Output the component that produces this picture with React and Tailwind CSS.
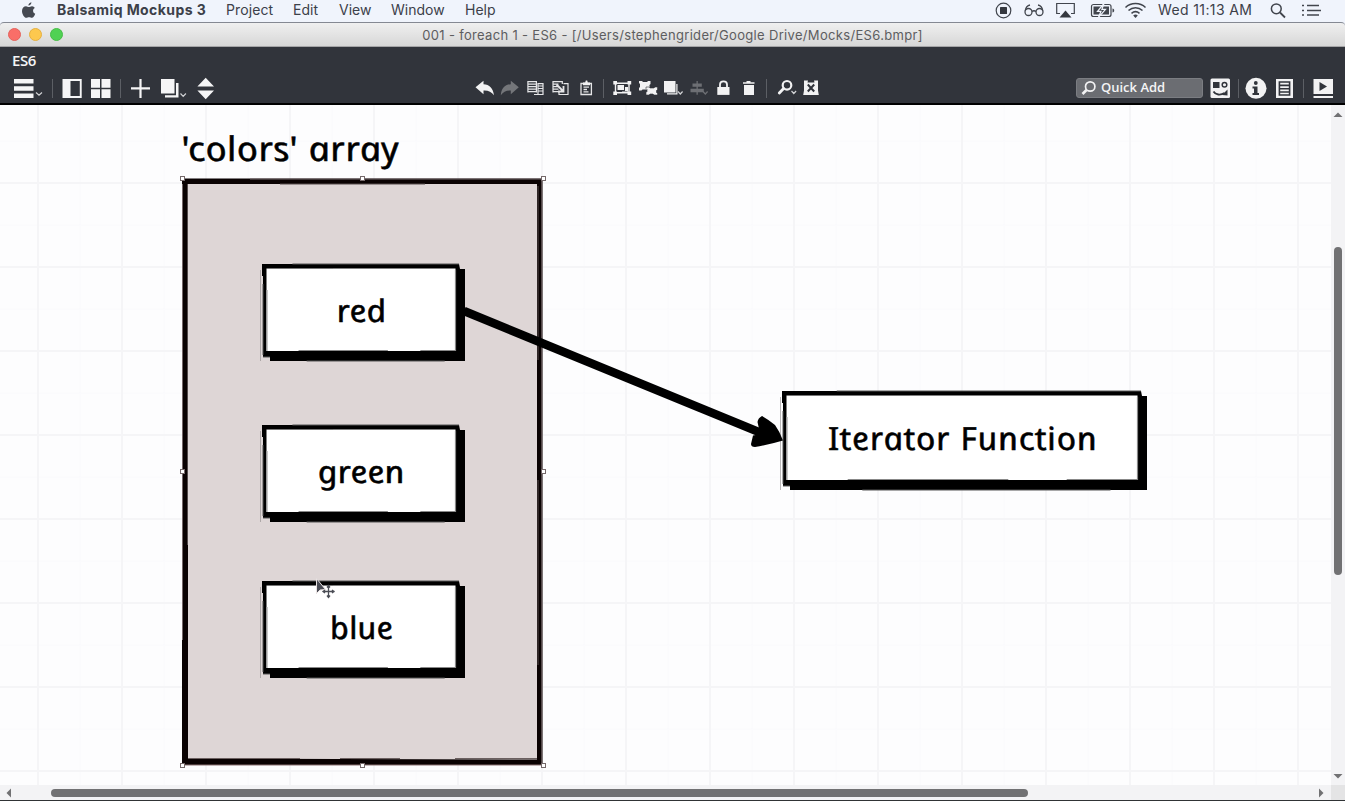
const HAND = 'font-["Noto_Sans","Open_Sans",sans-serif] italic';

function Label({ children, className }) {
  return (
    <span className={`inline-block origin-center skew-x-[12deg] whitespace-nowrap text-black [-webkit-text-stroke:0.5px_black] [stroke-linejoin:round] ${HAND} ${className}`}>
      {children}
    </span>
  );
}

function Sep() {
  return <div className="h-5 w-px shrink-0 bg-[#5c5f65]" />;
}

function Icon({ w = 16, h = 16, className = "", children }) {
  return (
    <svg width={w} height={h} viewBox={`0 0 ${w} ${h}`} className={`shrink-0 ${className}`} fill="#f2f2f3">
      {children}
    </svg>
  );
}

function MenuBar() {
  return (
    <div className='flex h-[22px] shrink-0 items-center bg-[#f0f4fc] font-["Inter",sans-serif] text-[14px] leading-[20px] text-[#3c4049]'>
      <svg width="15" height="17" viewBox="0 0 15 17" className="mb-[2px] ml-[21px] shrink-0" fill="#454951">
        <path d="M10.4.3c.1 1.6-1.300 3.300-3 3.300C7.200 2.100 8.700.500 10.400.3zM13.800 6c-1.200.7-1.800 1.700-1.700 2.900.1 1.400.9 2.300 2.100 2.800-.6 1.800-1.900 4-3.300 4.100-1 0-1.500-.6-2.800-.6s-1.900.6-2.800.6C3.400 15.800 1 12.300 1 9c0-3 1.900-4.800 4-4.800 1.200 0 2.100.8 2.900.8.800 0 1.800-.9 3.300-.8 1 .1 2 .6 2.600 1.800z" />
      </svg>
      <div className="flex pb-[2px]">
        <span className="ml-[21px] w-[149px] whitespace-nowrap font-bold tracking-[0.42px]">Balsamiq Mockups 3</span>
        <span className="ml-[20px] w-[48px] tracking-[0.1px]">Project</span>
        <span className="ml-[19px] w-[26px]">Edit</span>
        <span className="ml-[20px] w-[33px]">View</span>
        <span className="ml-[19px] w-[54px]">Window</span>
        <span className="ml-[20px]">Help</span>
      </div>
      <div className="flex-1" />
      <svg width="160" height="22" viewBox="990 0 160 22" className="shrink-0" fill="none" stroke="#41454d">
        <circle cx="1003.500" cy="10.500" r="7.300" strokeWidth="1.200" />
        <rect x="1000" y="7" width="7" height="7" rx="0.500" fill="#35383f" stroke="none" />
        <g strokeWidth="1.300">
          <circle cx="1028.500" cy="12" r="3.500" />
          <circle cx="1039.500" cy="12" r="3.500" />
          <path d="M1032 11.500q2-1.500 4 0M1025.300 10.500c.5-3 2-5 4.700-5.500M1042.700 10.500c-.5-3-2-5-4.700-5.500" />
        </g>
        <path d="M1060 13.500h-3.300v-10h17.600v10H1071" strokeWidth="1.200" />
        <path d="M1065.500 10.500l6 7h-12z" fill="#35383f" stroke="none" />
        <rect x="1091.500" y="4.500" width="19.500" height="12" rx="2" strokeWidth="1.200" />
        <rect x="1093.500" y="6.500" width="15.500" height="8" fill="#41454d" stroke="none" />
        <path d="M1104 3.500l-6.500 7.800h3.500l-2.500 6 7-8h-3.600z" fill="#41454d" stroke="#f0f4fc" strokeWidth="1.200" />
        <path d="M1112.500 8.500c2.300.5 2.300 3.500 0 4z" fill="#41454d" stroke="none" />
        <g strokeWidth="1.500">
          <path d="M1125.500 7.500c5.500-5.300 14.500-5.300 20 0M1128.500 10.500c4-3.800 10-3.800 14 0M1131.500 13.300c2.400-2 5.600-2 8 0" />
        </g>
        <path d="M1135.500 18l-2.300-2.500c1.300-1.200 3.300-1.200 4.600 0z" fill="#41454d" stroke="none" />
      </svg>
      <span className="ml-[8px] w-[95px] whitespace-nowrap pb-[2px] tracking-[0.38px]">Wed 11:13 AM</span>
      <svg width="92" height="22" viewBox="1253 0 92 22" className="shrink-0" fill="none" stroke="#41454d" strokeWidth="1.500">
        <circle cx="1276.300" cy="8.800" r="4.900" />
        <path d="M1280 12.500l5 5" strokeWidth="1.800" />
        <path d="M1307 5.500h12M1307 10.500h14M1307 15h12M1302 5.500h2M1302 10.500h2M1302 15h2" />
      </svg>
    </div>
  );
}

function TitleBar() {
  return (
    <div className='relative flex h-[25px] shrink-0 items-center justify-center rounded-t-[4px] border-t border-b border-t-[#858993] border-b-[#a5a5a7] bg-linear-to-b from-[#f0f0f0] to-[#d7d7d7] font-["Inter",sans-serif] text-[13px] text-[#5d5d5f]'>
      <div className="absolute left-2 top-[5px] flex gap-[8px]">
        <i className="size-[13px] rounded-full border border-[#e4635c] bg-[#f96e68]" />
        <i className="size-[13px] rounded-full border border-[#e5b040] bg-[#fdc84e]" />
        <i className="size-[13px] rounded-full border border-[#47bd47] bg-[#50d153]" />
      </div>
      <span className="whitespace-nowrap pt-[2px] tracking-[0.32px]">001 - foreach 1 - ES6 - [/Users/stephengrider/Google Drive/Mocks/ES6.bmpr]</span>
    </div>
  );
}

function Toolbar() {
  return (
    <div className="h-[58px] shrink-0 border-b-2 border-black bg-[#31343b]">
      <div className='h-[27px] pl-[12px] pt-[4px] font-["Open_Sans",sans-serif] text-[15px] leading-[18px] font-semibold tracking-[-0.4px] text-[#f5f5f6]'>ES6</div>
      <div className="flex h-[28px] items-center">
        <svg width="220" height="28" viewBox="0 74 220 28" className="shrink-0" fill="#f5f5f6">
          <path d="M14 79h19.500v4.500H14zM14 86.200h19.500v4.500H14zM14 93.500h19.500V98H14z" />
          <path d="M36 92.500l3 2.800 3-2.800M180.500 93.500l2.700 2.800 2.700-2.800" fill="none" stroke="#cfd0d3" strokeWidth="1.200" />
          <path d="M52 79h1v19h-1zM120 79h1v19h-1z" fill="#5c5f65" />
          <path d="M62.500 79h19.200v19H62.500zM70.500 81v15h9.300V81z" fillRule="evenodd" />
          <path d="M91 79h9v8.700h-9zM101.500 79h9v8.700h-9zM91 89.300h9V98h-9zM101.500 89.300h9V98h-9z" />
          <path d="M139.400 79h2.200v8.300h8.400v2.200h-8.400V98h-2.200v-8.500H131v-2.200h8.400z" />
          <path d="M161 79h13.500v14.500H161zM176 83h2.500v14.500H165v-2.300h11z" />
          <path d="M205.700 77.800l8.300 8.700h-16.600zM205.700 99.200l8.300-8.700h-16.600z" />
        </svg>
        <svg width="356" height="28" viewBox="470 74 356 28" className="ml-[250px] shrink-0" fill="#f2f2f3">
          <path d="M475.500 87.200l8-6.500v3.600c6 .3 9.500 4 10.500 11-2.500-3.500-5.500-5-10.500-4.800v3.700z" />
          <path d="M518.800 87.200l-8-6.500v3.600c-6 .3-9.500 4-10 11 2.500-3.500 5-5 10-4.800v3.700z" fill="#74767a" />
          <g fill="none" stroke="#e5e5e7" strokeWidth="1.200">
            <path d="M527.500 81.600h9M527.500 84.100h9M527.500 86.600h9M527.500 89.100h9M527.500 91.600h9M527.900 81v11.500M536.400 81v11.500M538 83.600h5V94.500h-9M538 86h5M538 88.500h5M538 91h5M543 83v12M538 83v12" />
            <path d="M552.500 81.600h10M552.500 84.100h6M552.500 86.600h6M552.500 89.100h6M552.500 91.600h6M553 81v11.500M562.300 81v3M563.500 83.600h4.500v10.900h-9V92" />
            <path d="M556.500 84.500l6.500 6.500M563.500 86v5.500H558" strokeWidth="1.800" />
            <path d="M581 83.500h10.400v11H581zM583.500 87.200h5.500M583.500 89.500h3.500M583.500 91.800h5" strokeWidth="1.300" />
          </g>
          <path d="M583 82.500h2.200l.6-2h1.400l.6 2h2.200v2.800h-7z" />
          <path d="M603 79h1v19h-1zM766 79h1v19h-1z" fill="#5c5f65" />
          <path d="M615.500 83.300h13.500v9.500h-13.500z" fill="none" stroke="#f2f2f3" strokeWidth="1.400" />
          <path d="M613.300 81h3.700v3.600h-3.700zM627.500 81h3.700v3.600h-3.700zM613.300 91.400h3.700v3.600h-3.700zM627.500 91.400h3.700v3.600h-3.700zM617.500 85h6.500v5h-6.500zM625 87h3v4.500h-6V91h3z" />
          <path d="M639 81h3l1 1h4l1-1h2.500v3l-1 1v3l1 1v1.500h-3l-1-1h-4l-1 1H639V88l1-1v-3l-1-1z" />
          <path d="M646 87h3l1 1h4l1-1h2.500v2.500l-1 1v2l1 1V95H654l-1-1h-3l-1 1h-3v-2.500l1-1v-2l-1-1z" stroke="#31343b" strokeWidth="0.600" />
          <path d="M664 81h11.500v11.500H664zM676.300 84h1.200v10.500H667v-1.200h9.300z" />
          <path d="M678 91.500l2.300 2.500 2.300-2.500M791.500 91l2.300 2.500 2.300-2.500" fill="none" stroke="#d0d1d4" strokeWidth="1.200" />
          <path d="M696.500 81h1.300v2.500h4v3.300h-4v2h6v3.400h-6v2.500h-1.300v-2.500h-6v-3.400h6v-2h-4v-3.300h4z" fill="#6d6f74" />
          <path d="M703 91.500l2.300 2.500 2.300-2.500" fill="none" stroke="#6d6f74" strokeWidth="1.200" />
          <path d="M717.300 87h12.200v7.900h-12.200z" />
          <path d="M720 88v-3.500c0-4.200 7-4.200 7 0V88" fill="none" stroke="#f2f2f3" strokeWidth="1.800" />
          <path d="M743 82.300h3.500V81h4v1.300h4v1.500H743zM744 85h10v9.900h-10z" />
          <circle cx="787" cy="85.300" r="4.300" fill="none" stroke="#f2f2f3" strokeWidth="2.200" />
          <path d="M783.600 88.500l-4.300 4.500" stroke="#f2f2f3" strokeWidth="2.800" strokeLinecap="round" />
          <path d="M804 80.500h4l-.5 2h7l-.5-2h4v10l.8 4.500h-15.600l.8-4.500z" />
          <path d="M807.800 84.500l6.400 7M814.200 84.500l-6.400 7" stroke="#31343b" strokeWidth="2" />
        </svg>
        <div className='ml-auto flex h-[20px] w-[127px] items-center rounded-[3px] border border-[#7b7d82] bg-[#6b6d72] pl-[4px] font-["Open_Sans",sans-serif] text-[13px] font-semibold text-[#f4f4f5]'>
          <Icon>
            <circle cx="9.200" cy="6.500" r="4.700" fill="none" stroke="#f2f2f3" strokeWidth="1.700" />
            <path d="M5.500 10L1.500 14" stroke="#f2f2f3" strokeWidth="2.600" />
          </Icon>
          <span className="ml-[4px] whitespace-nowrap">Quick Add</span>
        </div>
        <svg width="142" height="28" viewBox="1203 74 142 28" className="shrink-0" fill="#f2f2f3">
          <rect x="1210.500" y="78.500" width="19.500" height="19.500" rx="1.500" />
          <g fill="none" stroke="#31343b" strokeWidth="1.500">
            <path d="M1213 82h6.500v6h-6.500z" fill="#31343b" stroke="none" />
            <circle cx="1224.500" cy="84.800" r="2.300" />
            <path d="M1213.500 91.500c2 3.500 7 4 11 1.500" strokeWidth="1.800" />
            <path d="M1227.500 89.500v6l-5.500-.5z" fill="#31343b" stroke="none" />
          </g>
          <path d="M1238 79h1v19h-1zM1303 79h1v19h-1z" fill="#5c5f65" />
          <circle cx="1256" cy="88.300" r="10.500" />
          <circle cx="1255.800" cy="83" r="1.900" fill="#31343b" />
          <path d="M1252.500 86.500h5v6.500h1.500v2h-6.500v-2h1.500v-4.500h-1.500z" fill="#31343b" />
          <path d="M1276 79h17v19h-17z" />
          <path d="M1279.400 82h10.200v13h-10.200zM1279 85.400h11M1279 88.700h11M1279 92h11" fill="none" stroke="#31343b" strokeWidth="1.600" />
          <path d="M1313.500 79h19.500v15h-19.500zM1313.500 96h19.500v2h-19.500z" />
          <path d="M1319.500 82v9l7.500-4.500z" fill="#31343b" />
        </svg>
      </div>
    </div>
  );
}

function SketchBox({ x, y, w, h, children }) {
  const r = w - 5, b = h - 10;
  return (
    <div className="absolute flex items-center justify-center pr-[6px] pb-[5px]" style={{ left: x, top: y, width: w, height: h }}>
      <svg width={w + 4} height={h + 4} viewBox={`-2 -2 ${w + 4} ${h + 4}`} className="absolute -left-[2px] -top-[2px]">
        <path d={`M8 5H${w}V${h}H8z`} fill="#000" />
        <path d={`M-1.500 6V${h}`} stroke="#8d8989" strokeWidth="0.600" />
        <path d={`M0 0H${r - 1}L${r} 5V${h - 4}H1V12H0z`} fill="#000" />
        <path d={`M4.500 4.500H${r - 4.500}V${b}H4.500z`} fill="#fff" />
        <path d={`M${w * 0.15} 0H${r - 1}`} stroke="#555" strokeWidth="1" />
        <path d={`M5 4.500H${w * 0.35}`} stroke="#777" strokeWidth="1" />
        <path d={`M5 26V${b}`} stroke="#aaa" strokeWidth="1.300" />
        <path d={`M${r - 4.500} 6V${b}M${w * 0.18} ${b - 0.500}H${w * 0.62}M${w * 0.78} ${b - 0.500}H${r - 4}`} stroke="#888" strokeWidth="1.200" />
        <path d={`M1 20V${h - 6}M1 ${h - 4}H8`} stroke="#555" strokeWidth="1" />
        <path d={`M${w * 0.22} ${h}H${w * 0.9}`} stroke="#555" strokeWidth="1" />
      </svg>
      <div className="relative">{children}</div>
    </div>
  );
}

function Handle({ x, y }) {
  return <i className="absolute size-[5px] border border-[#75696a] bg-white" style={{ left: x - 2, top: y - 2 }} />;
}

function Canvas() {
  return (
    <div className="relative min-w-0 flex-1 overflow-hidden bg-[#fdfdfe]">
      <svg width="1331" height="680" viewBox="0 105 1331 680" className="absolute left-0 top-0">
        <defs>
          <pattern id="grid" x="37" y="98" width="84" height="84" patternUnits="userSpaceOnUse">
            <path d="M43 0V84M0 43H84" stroke="#fafafc" strokeWidth="1" />
            <path d="M1 0V84M0 1H84" stroke="#f5f5f7" strokeWidth="2" />
          </pattern>
        </defs>
        <rect y="105" width="1331" height="680" fill="url(#grid)" />
        <rect x="185" y="181" width="355" height="581" fill="#ded6d6" />
        <path d="M182 178.500H542.500V765H182zM188 184V758.500L537 759.500V184z" fill="#0a0202" fillRule="evenodd" />
        <path d="M182.500 184V640M541.800 180V765M250 179H543" stroke="#75686a" strokeWidth="1" />
        <path d="M187.500 184V545M538 186V360M538 480V665M280 184H425" stroke="#544b4b" strokeWidth="1" />
        <path d="M188 758.500H300M340 758.500H400M455 758.500H537" stroke="#6b6060" strokeWidth="1.200" />
        <path d="M182 765H543" stroke="#8a7070" strokeWidth="1" />
      </svg>
      <div className="absolute left-[181px] top-[20px] flex h-[46px] w-[218px] items-center justify-center">
        <Label className="scale-x-[1.1] text-[34px] tracking-[0.3px]">'colors' array</Label>
      </div>
      <SketchBox x={262} y={159} w={203} h={97}><Label className="scale-x-[1.1] text-[31px]">red</Label></SketchBox>
      <SketchBox x={262} y={320} w={203} h={97}><Label className="scale-x-[1.1] text-[31px]">green</Label></SketchBox>
      <SketchBox x={262} y={476} w={203} h={97}><Label className="scale-x-[1.06] text-[31px]">blue</Label></SketchBox>
      <SketchBox x={782} y={286} w={365} h={99}><Label className="scale-x-[1.07] text-[32px] tracking-[0.75px]">Iterator Function</Label></SketchBox>
      <svg width="330" height="150" viewBox="460 300 330 150" className="absolute left-[460px] top-[195px]">
        <path d="M464 311C560 350 660 391 766 435" fill="none" stroke="#000" strokeWidth="8.500" />
        <path d="M762 416Q769 420 775 425Q780 432 783 440.500Q768 445 755 447Q751 447 751 444L753 435.500L761 434L759.500 431L757.500 422Q758 418 762 416z" fill="#000" />
      </svg>
      {[182, 362, 543].map((x) => [73, 366, 660].map((y) => (x === 362 && y === 366 ? null : <Handle key={`${x}-${y}`} x={x} y={y} />)))}
      <svg width="22" height="24" viewBox="314 576 22 24" className="absolute left-[314px] top-[471px]">
        <path d="M316.500 578.500V593.500L320 590L325.500 589.500z" fill="#494b54" stroke="#e8e2e2" />
        <path d="M328.500 586v11M323.500 591.500h11M327 587.500l1.500-2 1.500 2M327 595.500l1.500 2 1.500-2M325 590l-2 1.500 2 1.500M332 590l2 1.500-2 1.500" fill="none" stroke="#4b4d55" strokeWidth="1.300" />
      </svg>
    </div>
  );
}

export default function App() {
  return (
    <div className="flex h-[801px] w-[1345px] flex-col overflow-hidden bg-[#f0f4fc]">
      <MenuBar />
      <TitleBar />
      <Toolbar />
      <div className="flex min-h-0 flex-1">
        <Canvas />
        <div className="flex w-[14px] shrink-0 flex-col items-center bg-[#f3f3f5]">
          <svg width="14" height="14" className="mt-[3px]" fill="#717173"><path d="M7 4.500L11.500 9h-9z" /></svg>
          <div className="mt-[125px] h-[328px] w-[8px] rounded-full bg-[#717173]" />
          <svg width="14" height="14" className="mt-auto mb-[2px]" fill="#717173"><path d="M7 9.500L11.500 5h-9z" /></svg>
        </div>
      </div>
      <div className="flex h-[15px] shrink-0 items-center bg-[#f3f3f5]">
        <svg width="14" height="14" className="ml-[2px]" fill="#717173"><path d="M4.500 7L9 2.500v9z" /></svg>
        <div className="ml-[35px] h-[8px] w-[977px] rounded-full bg-[#717173]" />
        <svg width="14" height="14" className="ml-auto mr-[3px]" fill="#717173"><path d="M9.500 7L5 2.500v9z" /></svg>
        <div className="h-[15px] w-[14px] bg-[#e4e4e5]" />
      </div>
      <div className="h-px shrink-0 bg-[#303335]" />
    </div>
  );
}
